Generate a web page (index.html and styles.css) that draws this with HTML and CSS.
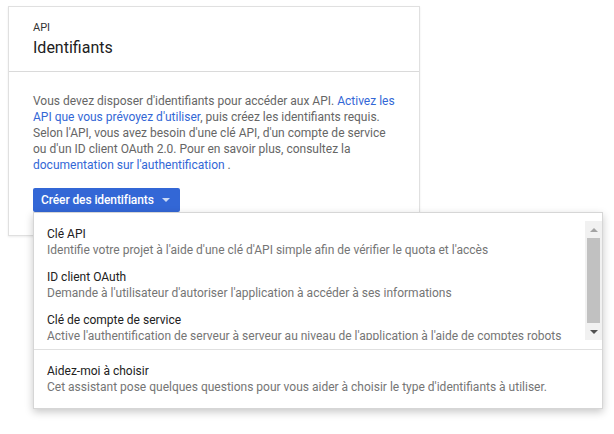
FILE: index.html
```html
<!DOCTYPE html>
<html lang="fr">
<head>
<meta charset="utf-8">
<link rel="stylesheet" href="styles.css">
</head>
<body>
<div class="card">
  <div class="card-header">
    <div class="eyebrow">API</div>
    <h1 class="title">Identifiants</h1>
  </div>
  <div class="card-body">
    <p class="intro">Vous devez disposer d'identifiants pour accéder aux API. <a href="#">Activez les API que vous prévoyez d'utiliser</a>, puis créez les identifiants requis. Selon l'API, vous avez besoin d'une clé API, d'un compte de service ou d'un ID client OAuth 2.0. Pour en savoir plus, consultez la <a href="#">documentation sur l'authentification</a> .</p>
    <div class="menu-anchor">
      <button class="btn-primary">Créer des identifiants <span class="caret"></span></button>
      <div class="dropdown">
        <div class="scroll-wrap">
          <ul class="options">
            <li class="option"><div class="opt-title">Clé API</div><div class="opt-desc">Identifie votre projet à l'aide d'une clé d'API simple afin de vérifier le quota et l'accès</div></li>
            <li class="option"><div class="opt-title">ID client OAuth</div><div class="opt-desc">Demande à l'utilisateur d'autoriser l'application à accéder à ses informations</div></li>
            <li class="option"><div class="opt-title">Clé de compte de service</div><div class="opt-desc">Active l'authentification de serveur à serveur au niveau de l'application à l'aide de comptes robots</div></li>
          </ul>
          <div class="scrollbar">
            <span class="sb-arrow up"></span>
            <span class="sb-thumb"></span>
            <span class="sb-arrow down"></span>
          </div>
        </div>
        <div class="help">
          <div class="opt-title">Aidez-moi à choisir</div>
          <div class="opt-desc">Cet assistant pose quelques questions pour vous aider à choisir le type d'identifiants à utiliser.</div>
        </div>
      </div>
    </div>
  </div>
</div>
</body>
</html>
```

FILE: styles.css
```css
* { box-sizing: border-box; }
html, body { margin: 0; padding: 0; background: #fff; }
html { height: 100%; }
body {
  min-height: 434px;
  font-family: Roboto, "Liberation Sans", Arial, sans-serif;
  color: #212121;
  padding: 6px 0 0 8px;
}
.card {
  width: 412px;
  border: 1px solid #e0e0e0;
  box-shadow: 0 1px 2px rgba(0,0,0,0.08);
  background: #fff;
}
.card-header {
  padding: 13px 24px 11px;
  border-bottom: 1px solid #dadada;
}
.eyebrow {
  font-size: 11px;
  line-height: 16px;
  color: #333;
}
.title {
  margin: 0;
  font-size: 16px;
  line-height: 24px;
  font-weight: 400;
  color: #212121;
}
.card-body {
  padding: 21px 24px 23px;
}
.intro {
  margin: 0;
  font-size: 12px;
  line-height: 16px;
  color: #666;
}
.intro a {
  color: #3367d6;
  text-decoration: none;
}
.menu-anchor {
  position: relative;
  margin-top: 15px;
}
.btn-primary {
  display: inline-flex;
  align-items: center;
  gap: 8px;
  height: 24px;
  padding: 0 10px 0 8px;
  border: none;
  border-radius: 2px;
  background: #3367d6;
  color: #fff;
  font-family: inherit;
  font-size: 12px;
  font-weight: 500;
  letter-spacing: -0.1px;
  cursor: pointer;
}
.caret {
  width: 0;
  height: 0;
  border-left: 4px solid transparent;
  border-right: 4px solid transparent;
  border-top: 4px solid rgba(255,255,255,0.75);
}
.dropdown {
  position: absolute;
  left: 0;
  top: 24px;
  width: 570px;
  background: #fff;
  border: 1px solid #d6d6d6;
  box-shadow: 0 3px 8px rgba(0,0,0,0.22);
  padding-top: 7px;
  z-index: 5;
}
.scroll-wrap {
  display: flex;
  height: 120px;
  overflow: hidden;
}
.options {
  flex: 1;
  min-width: 0;
  overflow: hidden;
  list-style: none;
  margin: 0;
  padding: 0;
}
.option {
  padding: 6px 12px 5px 13px;
}
.opt-title {
  font-size: 12px;
  line-height: 16px;
  color: #212121;
}
.opt-desc {
  font-size: 12px;
  line-height: 16px;
  color: #757575;
  white-space: nowrap;
}
.scrollbar {
  width: 17px;
  flex: none;
  margin-top: 1px;
  background: #f1f1f1;
  display: flex;
  flex-direction: column;
  align-items: center;
}
.sb-thumb {
  width: 13px;
  flex: 1;
  background: #c1c1c1;
}
.sb-arrow {
  height: 17px;
  width: 17px;
  display: flex;
  align-items: center;
  justify-content: center;
}
.sb-arrow::before {
  content: "";
  border-left: 4px solid transparent;
  border-right: 4px solid transparent;
}
.sb-arrow.up::before { border-bottom: 4px solid #a3a3a3; }
.sb-arrow.down::before { border-top: 4px solid #505050; }
.help {
  margin-top: 9px;
  border-top: 1px solid #e0e0e0;
  padding: 13px 12px 13px 13px;
}
```
